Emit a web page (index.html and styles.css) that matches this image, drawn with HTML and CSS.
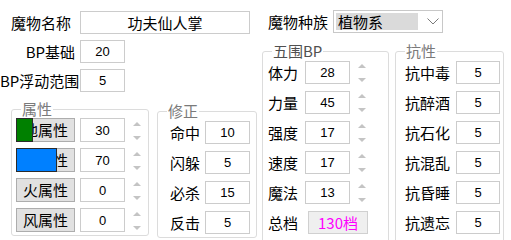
FILE: index.html
```html
<!DOCTYPE html>
<html>
<head>
    <title>魔物编辑</title>
    <link rel="stylesheet" href="styles.css">
</head>
<body>
    <div class="page">
        <div class="col-left">
            <div class="row row-first">
                <label class="lbl lbl-name">魔物名称</label>
                <input class="box box-name" type="text" value="功夫仙人掌">
            </div>
            <div class="row">
                <label class="lbl">BP基础</label>
                <input class="box" type="text" value="20">
            </div>
            <div class="row">
                <label class="lbl">BP浮动范围</label>
                <input class="box" type="text" value="5">
            </div>

            <div class="groups-left">
                <fieldset class="group group-attr">
                    <legend>属性</legend>
                    <div class="rows">
                        <div class="grow">
                            <span class="btn-wrap">
                                <button class="attr-btn">地属性</button>
                                <span class="swatch swatch-earth"></span>
                            </span>
                            <input class="box" type="text" value="30">
                            <span class="spin"><i class="up"></i><i class="down"></i></span>
                        </div>
                        <div class="grow">
                            <span class="btn-wrap">
                                <button class="attr-btn">水属性</button>
                                <span class="swatch swatch-water"></span>
                            </span>
                            <input class="box" type="text" value="70">
                            <span class="spin"><i class="up"></i><i class="down"></i></span>
                        </div>
                        <div class="grow">
                            <span class="btn-wrap">
                                <button class="attr-btn">火属性</button>
                            </span>
                            <input class="box" type="text" value="0">
                            <span class="spin"><i class="up"></i><i class="down"></i></span>
                        </div>
                        <div class="grow">
                            <span class="btn-wrap">
                                <button class="attr-btn">风属性</button>
                            </span>
                            <input class="box" type="text" value="0">
                            <span class="spin"><i class="up"></i><i class="down"></i></span>
                        </div>
                    </div>
                </fieldset>

                <fieldset class="group group-fix">
                    <legend>修正</legend>
                    <div class="rows">
                        <div class="grow"><label class="glbl">命中</label><input class="box" type="text" value="10"></div>
                        <div class="grow"><label class="glbl">闪躲</label><input class="box" type="text" value="5"></div>
                        <div class="grow"><label class="glbl">必杀</label><input class="box" type="text" value="15"></div>
                        <div class="grow"><label class="glbl">反击</label><input class="box" type="text" value="5"></div>
                    </div>
                </fieldset>
            </div>
        </div>

        <div class="col-right">
            <div class="row row-first row-race">
                <label class="lbl-race">魔物种族</label>
                <div class="select">
                    <span class="select-value">植物系</span>
                    <svg class="chevron" width="12" height="7" viewBox="0 0 12 7">
                        <polyline points="0.5,0.5 6,6 11.5,0.5" fill="none" stroke="#7a7a7a" stroke-width="1"/>
                    </svg>
                </div>
            </div>

            <div class="groups-right">
                <fieldset class="group group-bp">
                    <legend class="legend-dark">五围BP</legend>
                    <div class="rows">
                        <div class="grow"><label class="glbl">体力</label><input class="box" type="text" value="28"><span class="spin"><i class="up"></i><i class="down"></i></span></div>
                        <div class="grow"><label class="glbl">力量</label><input class="box" type="text" value="45"><span class="spin"><i class="up"></i><i class="down"></i></span></div>
                        <div class="grow"><label class="glbl">强度</label><input class="box" type="text" value="17"><span class="spin"><i class="up"></i><i class="down"></i></span></div>
                        <div class="grow"><label class="glbl">速度</label><input class="box" type="text" value="17"><span class="spin"><i class="up"></i><i class="down"></i></span></div>
                        <div class="grow"><label class="glbl">魔法</label><input class="box" type="text" value="13"><span class="spin"><i class="up"></i><i class="down"></i></span></div>
                        <div class="grow"><label class="glbl">总档</label><span class="total">130档</span></div>
                    </div>
                </fieldset>

                <fieldset class="group group-resist">
                    <legend>抗性</legend>
                    <div class="rows">
                        <div class="grow"><label class="glbl glbl-3">抗中毒</label><input class="box" type="text" value="5"></div>
                        <div class="grow"><label class="glbl glbl-3">抗醉酒</label><input class="box" type="text" value="5"></div>
                        <div class="grow"><label class="glbl glbl-3">抗石化</label><input class="box" type="text" value="5"></div>
                        <div class="grow"><label class="glbl glbl-3">抗混乱</label><input class="box" type="text" value="5"></div>
                        <div class="grow"><label class="glbl glbl-3">抗昏睡</label><input class="box" type="text" value="5"></div>
                        <div class="grow"><label class="glbl glbl-3">抗遗忘</label><input class="box" type="text" value="5"></div>
                    </div>
                </fieldset>
            </div>
        </div>
    </div>
</body>
</html>
```

FILE: styles.css
```css
body {
    margin: 0;
    padding: 0;
    background: #ffffff;
    color: #000000;
    font-family: "Noto Sans CJK SC", "Microsoft YaHei", sans-serif;
    font-size: 15px;
    overflow: hidden;
}

.page {
    display: flex;
    width: 511px;
    height: 240px;
    overflow: hidden;
}

.col-left {
    width: 257px;
    flex-shrink: 0;
}

.col-right {
    flex: 1;
}

/* top rows */
.row {
    display: flex;
    align-items: center;
    height: 23px;
    margin-top: 6px;
}

.row-first {
    margin-top: 11px;
}

.lbl {
    width: 75px;
    text-align: right;
    line-height: 18px;
    white-space: nowrap;
}

.lbl-name {
    text-align: left;
    padding-left: 11px;
    box-sizing: border-box;
}

.box {
    box-sizing: border-box;
    width: 45px;
    height: 23px;
    margin: 0 0 0 5px;
    padding: 0;
    border: 1px solid #cccccc;
    background: #ffffff;
    color: #000000;
    font-family: "Liberation Sans", Arial, sans-serif;
    font-size: 13px;
    text-align: center;
    outline: none;
}

.box-name {
    width: 170px;
    font-family: "Noto Sans CJK SC", sans-serif;
    font-size: 15px;
}

/* group boxes */
.groups-left {
    display: flex;
    align-items: flex-start;
    margin-top: 8px;
}

.group {
    margin: 0;
    padding: 0 0 3px 0;
    border: 1px solid #dcdcdc;
    border-radius: 3px;
    min-width: 0;
    box-sizing: border-box;
}

.group legend {
    margin-left: 9px;
    padding: 0 1px;
    line-height: 18px;
    height: 18px;
    color: #7a7a7a;
}

.group .legend-dark {
    color: #505050;
}

.group-attr {
    margin-left: 11px;
    width: 138px;
}

.group-fix {
    margin-left: 8px;
    margin-top: 2px;
    width: 100px;
}

.rows {
    display: flex;
    flex-direction: column;
    gap: 6px;
}

.group-fix .rows,
.group-bp .rows,
.group-resist .rows {
    gap: 7px;
    padding-top: 1px;
}

.group-attr .rows {
    padding-left: 4px;
}

.group-fix .rows {
    padding-left: 12px;
}

.grow {
    display: flex;
    align-items: center;
    height: 23px;
}

.group-attr .grow {
    height: 24px;
}

.group-attr .box {
    height: 24px;
}

.glbl {
    width: 30px;
    line-height: 18px;
    white-space: nowrap;
}

.glbl-3 {
    width: 45px;
}

/* attribute buttons */
.btn-wrap {
    position: relative;
    display: block;
    width: 59px;
    height: 24px;
}

.attr-btn {
    width: 59px;
    height: 24px;
    margin: 0;
    padding: 0;
    border: 1px solid #adadad;
    background: #e1e1e1;
    color: #000000;
    font-family: "Noto Sans CJK SC", sans-serif;
    font-size: 15px;
    line-height: 18px;
}

.swatch {
    position: absolute;
    left: 0;
    top: 0;
    height: 24px;
    box-sizing: border-box;
    border: 1px solid #2b2b2b;
}

.swatch-earth {
    width: 17px;
    background: #008000;
}

.swatch-water {
    width: 41px;
    background: #0080ff;
}

/* spinner arrows */
.spin {
    display: flex;
    flex-direction: column;
    justify-content: space-between;
    height: 23px;
    padding: 3px 0 2px;
    margin-left: 8px;
    box-sizing: border-box;
}

.spin i {
    display: block;
    width: 0;
    height: 0;
    border-left: 4px solid transparent;
    border-right: 4px solid transparent;
}

.spin .up {
    border-bottom: 4px solid #c4c4c4;
}

.spin .down {
    border-top: 4px solid #c4c4c4;
}

/* right column */
.lbl-race {
    margin-left: 11px;
    width: 60px;
    line-height: 18px;
    white-space: nowrap;
}

.row-race {
    margin-top: 10px;
}

.select {
    display: flex;
    align-items: center;
    box-sizing: border-box;
    width: 110px;
    height: 23px;
    margin-left: 5px;
    padding: 2px;
    border: 1px solid #c8c8c8;
    background: #ffffff;
}

.select-value {
    width: 82px;
    height: 17px;
    line-height: 17px;
    padding-left: 2px;
    box-sizing: border-box;
    background: #dadada;
}

.chevron {
    margin-left: 9px;
}

.groups-right {
    display: flex;
    align-items: flex-start;
    margin-top: 9px;
}

.group-bp {
    margin-left: 5px;
    width: 127px;
    height: 220px;
}

.group-resist {
    margin-left: 6px;
    width: 109px;
    height: 220px;
}

.group-bp .rows {
    padding-left: 5px;
}

.group-bp .box {
    margin-left: 7px;
}

.group-resist .rows {
    padding-left: 9px;
}

.group-resist .box {
    width: 44px;
    margin-left: 6px;
}

.total {
    box-sizing: border-box;
    width: 60px;
    height: 23px;
    margin-left: 10px;
    border: 1px solid #d0d0d0;
    background: #efefef;
    color: #ff00ff;
    line-height: 21px;
    text-align: center;
}
```
